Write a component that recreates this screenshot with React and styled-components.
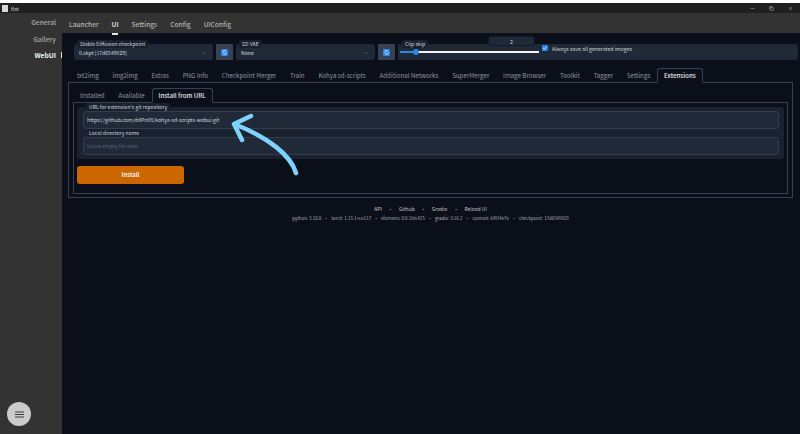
import React from 'react'
import styled, { createGlobalStyle } from 'styled-components'
import { ChevronDown, Minus, Copy, X } from 'lucide-react'

const GlobalStyle = createGlobalStyle`
    html, body {
        margin: 0;
        background: #0b0f19;
        overflow: hidden;
    }
    * {
        box-sizing: border-box;
    }
`

const Window = styled.div`
    width: 800px;
    height: 434px;
    display: flex;
    flex-direction: column;
    border-top: 3px solid #fff;
    font-family: 'Noto Sans CJK SC', 'Noto Sans', sans-serif;
    color: #d1d5db;
    position: relative;
    overflow: hidden;
`

const TitleBar = styled.div`
    height: 10px;
    flex: none;
    background: #202020;
    display: flex;
    align-items: center;
    padding: 0 7px 0 2px;
    font-size: 5px;
    color: #d4d4d4;
`

const AppIcon = styled.span`
    width: 6px;
    height: 7px;
    background: #d8d8d8;
    margin-right: 3px;
`

const WindowButtons = styled.div`
    margin-left: auto;
    display: flex;
    gap: 14px;
    color: #cfcfcf;
`

const Body = styled.div`
    flex: 1;
    display: flex;
    min-height: 0;
`

const Sidebar = styled.nav`
    width: 62px;
    flex: none;
    background: #333;
    display: flex;
    flex-direction: column;
    align-items: flex-end;
    padding: 1px 6px 8px 0;
`

const SideLink = styled.div`
    height: 16.5px;
    line-height: 16.5px;
    font-size: 6.7px;
    font-weight: ${p => (p.$active ? 700 : 500)};
    color: ${p => (p.$active ? '#f3f4f6' : '#a8a8a8')};
    position: relative;
    ${p =>
        p.$active &&
        `&::after {
            content: '';
            position: absolute;
            right: -6px;
            top: 5px;
            width: 1px;
            height: 6px;
            background: #e5e5e5;
        }`}
`

const MenuButton = styled.div`
    width: 24px;
    height: 24px;
    border-radius: 50%;
    background: #cbcbcb;
    margin: auto 25px 0 0;
    display: flex;
    align-items: center;
    justify-content: center;
    color: #3a3a3a;
`

const Main = styled.div`
    flex: 1;
    min-width: 0;
    display: flex;
    flex-direction: column;
    background: #0b0f19;
`

const TopNav = styled.div`
    height: 20px;
    flex: none;
    background: #333;
    display: flex;
    gap: 13px;
    padding: 2px 0 0 7px;
    align-items: center;
`

const TopLink = styled.div`
    font-size: 6.6px;
    font-weight: 500;
    position: relative;
    color: ${p => (p.$active ? '#f3f4f6' : '#b4b4b4')};
    ${p =>
        p.$active &&
        `&::after {
            content: '';
            position: absolute;
            left: 0;
            right: 0;
            bottom: -6px;
            height: 2px;
            background: #e5e5e5;
        }`}
`

const Content = styled.div`
    flex: 1;
    padding: 11px 2px 0 12px;
    display: flex;
    flex-direction: column;
`

const SettingsRow = styled.div`
    display: flex;
    height: 16px;
    flex: none;
    gap: 3px;
`

const Block = styled.div`
    position: relative;
    width: 139px;
    background: #1f2937;
    border-radius: 3px;
    padding: 1px 6px 0 5px;
    display: flex;
    align-items: center;
    justify-content: space-between;
    font-size: 5.1px;
    color: #d8dbe0;
`

const Legend = styled.span`
    position: absolute;
    left: ${p => p.$left || 3}px;
    top: ${p => p.$top || -4}px;
    height: 8px;
    line-height: 8px;
    padding: 0 3px;
    font-size: 5.1px;
    color: #d1d5db;
    background: #18202d;
    border-radius: 2px;
    white-space: nowrap;
`

const RefreshButton = styled.div`
    width: 17px;
    flex: none;
    background: #374151;
    display: flex;
    align-items: center;
    justify-content: center;
`

const SliderBlock = styled.div`
    flex: 1;
    position: relative;
    background: #1f2937;
    border-radius: 0 3px 3px 0;
    display: flex;
    align-items: center;
`

const SliderTrack = styled.div`
    width: 139px;
    height: 2px;
    margin-left: 2px;
    background: #f3f4f6;
    position: relative;
`

const SliderFill = styled.div`
    width: 16px;
    height: 100%;
    background: #2b86e8;
    position: relative;
    &::after {
        content: '';
        position: absolute;
        right: -3px;
        top: -2px;
        width: 6px;
        height: 6px;
        border-radius: 50%;
        background: #2b86e8;
    }
`

const SliderValue = styled.div`
    position: absolute;
    left: 88px;
    top: -15px;
    width: 47px;
    height: 10px;
    line-height: 9px;
    text-align: center;
    font-size: 5.1px;
    background: #1f2937;
    border: 1px solid #111827;
    border-radius: 3px;
`

const CheckLabel = styled.label`
    display: flex;
    align-items: center;
    gap: 4px;
    font-size: 5.2px;
    margin: -8px 0 0 3px;
    color: #d1d5db;
`

const CheckBox = styled.span`
    width: 6px;
    height: 6px;
    background: #2b86e8;
    border-radius: 1px;
    display: flex;
`

const TabBar = styled.div`
    display: flex;
    height: 16px;
    flex: none;
    align-items: flex-end;
    padding-left: ${p => p.$pad}px;
    border-bottom: 1px solid #374151;
    margin-top: ${p => p.$top || 0}px;
`

const Tab = styled.div`
    height: 15px;
    line-height: 13px;
    font-size: 6.2px;
    white-space: nowrap;
    color: ${p => (p.$active ? '#e5e7eb' : '#8f96a3')};
    font-weight: ${p => (p.$active ? 500 : 400)};
    padding: 0 5.9px;
    margin-bottom: -1px;
    border: 1px solid ${p => (p.$active ? '#374151' : 'transparent')};
    border-bottom-color: ${p => (p.$active ? '#0b0f19' : 'transparent')};
    border-radius: 3px 3px 0 0;
`

const OuterPanel = styled.div`
    width: 725px;
    margin-left: -6px;
    flex: none;
`

const OuterBody = styled.div`
    height: 115px;
    border: 1px solid #374151;
    border-top: none;
    padding: 4px;
`

const InnerBody = styled.div`
    height: 91px;
    border: 1px solid #374151;
    border-top: none;
    padding: 4px 3px 0 3px;
`

const FormPanel = styled.div`
    height: 52px;
    background: #1a2230;
    border-radius: 3px;
    padding: 4px 5px 0 6px;
    display: flex;
    flex-direction: column;
    gap: 8px;
`

const Field = styled.div`
    position: relative;
    height: 18px;
    background: #1f2937;
    border: 1px solid #333d4c;
    border-radius: 3px;
    padding-left: 3px;
    line-height: 15px;
    font-size: 5.2px;
    color: ${p => (p.$placeholder ? '#5b6472' : '#d1d5db')};
`

const InstallButton = styled.div`
    width: 107px;
    height: 18px;
    margin-top: 7px;
    border-radius: 3px;
    background: #cc6600;
    color: #f5f5f5;
    font-size: 5.8px;
    font-weight: 700;
    text-align: center;
    line-height: 18px;
`

const Footer = styled.footer`
    width: 725px;
    margin: 7px 0 0 -6px;
    display: flex;
    flex-direction: column;
    align-items: center;
    gap: 3px;
`

const FooterLinks = styled.div`
    display: flex;
    gap: 6px;
    font-size: 5px;
    color: #c2c6cd;
`

const FooterInfo = styled.div`
    display: flex;
    gap: 2.8px;
    font-size: 4.4px;
    color: #b0b5bd;
`

const Arrow = styled.svg`
    position: absolute;
    left: 225px;
    top: 105px;
    pointer-events: none;
`

const outerTabs = [
    'txt2img',
    'img2img',
    'Extras',
    'PNG Info',
    'Checkpoint Merger',
    'Train',
    'Kohya sd-scripts',
    'Additional Networks',
    'SuperMerger',
    'Image Browser',
    'Toolkit',
    'Tagger',
    'Settings',
    'Extensions',
]

function RefreshIcon() {
    return (
        <svg width="7" height="7" viewBox="0 0 7 7">
            <rect width="7" height="7" rx="1" fill="#2b86e8" />
            <path
                d="M1.6 3.5a1.9 1.9 0 0 1 3.3-1.2M5.4 3.5a1.9 1.9 0 0 1-3.3 1.2"
                fill="none"
                stroke="#fff"
                strokeWidth="0.8"
            />
        </svg>
    )
}

export default function App() {
    return (
        <>
            <GlobalStyle />
            <Window>
                <TitleBar>
                    <AppIcon />
                    flat
                    <WindowButtons>
                        <Minus size={5} />
                        <Copy size={5} />
                        <X size={5} />
                    </WindowButtons>
                </TitleBar>
                <Body>
                    <Sidebar>
                        <SideLink>General</SideLink>
                        <SideLink>Gallery</SideLink>
                        <SideLink $active>WebUI</SideLink>
                        <MenuButton>
                            <svg width="9" height="7" viewBox="0 0 9 7">
                                <path
                                    d="M0 1h9M0 3.5h9M0 6h9"
                                    stroke="currentColor"
                                    strokeWidth="1"
                                />
                            </svg>
                        </MenuButton>
                    </Sidebar>
                    <Main>
                        <TopNav>
                            <TopLink>Launcher</TopLink>
                            <TopLink $active>UI</TopLink>
                            <TopLink>Settings</TopLink>
                            <TopLink>Config</TopLink>
                            <TopLink>UIConfig</TopLink>
                        </TopNav>
                        <Content>
                            <SettingsRow>
                                <Block>
                                    <Legend>Stable Diffusion checkpoint</Legend>
                                    0.ckpt [17d6549029]
                                    <ChevronDown size={6} color="#7b8494" />
                                </Block>
                                <RefreshButton>
                                    <RefreshIcon />
                                </RefreshButton>
                                <Block>
                                    <Legend>SD VAE</Legend>
                                    None
                                    <ChevronDown size={6} color="#7b8494" />
                                </Block>
                                <RefreshButton>
                                    <RefreshIcon />
                                </RefreshButton>
                                <SliderBlock>
                                    <Legend $left={4}>Clip skip</Legend>
                                    <SliderTrack>
                                        <SliderFill />
                                        <SliderValue>2</SliderValue>
                                    </SliderTrack>
                                    <CheckLabel>
                                        <CheckBox>
                                            <svg viewBox="0 0 6 6">
                                                <path
                                                    d="M1.2 3l1.2 1.2 2.2-2.4"
                                                    fill="none"
                                                    stroke="#fff"
                                                    strokeWidth="0.8"
                                                />
                                            </svg>
                                        </CheckBox>
                                        Always save all generated images
                                    </CheckLabel>
                                </SliderBlock>
                            </SettingsRow>
                            <OuterPanel>
                                <TabBar $pad={2} $top={7}>
                                    {outerTabs.map(name => (
                                        <Tab
                                            key={name}
                                            $active={name === 'Extensions'}
                                        >
                                            {name}
                                        </Tab>
                                    ))}
                                </TabBar>
                                <OuterBody>
                                    <TabBar $pad={0}>
                                        <Tab>Installed</Tab>
                                        <Tab>Available</Tab>
                                        <Tab $active>Install from URL</Tab>
                                    </TabBar>
                                    <InnerBody>
                                        <FormPanel>
                                            <Field>
                                                <Legend $left={2} $top={-9}>
                                                    URL for extension's git repository
                                                </Legend>
                                                https://github.com/ddPn08/kohya-sd-scripts-webui.git
                                            </Field>
                                            <Field $placeholder>
                                                <Legend $left={2} $top={-9}>
                                                    Local directory name
                                                </Legend>
                                                Leave empty for auto
                                            </Field>
                                        </FormPanel>
                                        <InstallButton>Install</InstallButton>
                                    </InnerBody>
                                </OuterBody>
                            </OuterPanel>
                            <Footer>
                                <FooterLinks>
                                    <span>API</span>
                                    <span>•</span>
                                    <span>Github</span>
                                    <span>•</span>
                                    <span>Gradio</span>
                                    <span>•</span>
                                    <span>Reload UI</span>
                                </FooterLinks>
                                <FooterInfo>
                                    <span>python: 3.10.0</span>
                                    <span>•</span>
                                    <span>torch: 1.13.1+cu117</span>
                                    <span>•</span>
                                    <span>xformers: 0.0.16rc425</span>
                                    <span>•</span>
                                    <span>gradio: 3.16.2</span>
                                    <span>•</span>
                                    <span>commit: 645f4e7e</span>
                                    <span>•</span>
                                    <span>checkpoint: 17d6549029</span>
                                </FooterInfo>
                            </Footer>
                        </Content>
                    </Main>
                </Body>
                <Arrow width="85" height="75" viewBox="0 0 85 75">
                    <path
                        d="M71 65C66 48 45 30 9 16M9 16L26 8M9 16L17 32"
                        fill="none"
                        stroke="#7dd3fc"
                        strokeWidth="4.5"
                        strokeLinecap="round"
                        strokeLinejoin="round"
                    />
                </Arrow>
            </Window>
        </>
    )
}
